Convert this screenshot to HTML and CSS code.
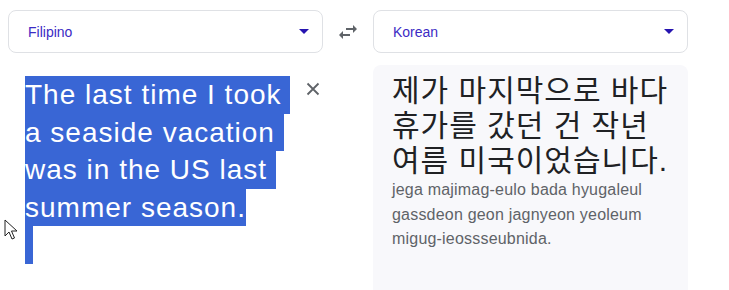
FILE: index.html
```html
<!DOCTYPE html>
<html lang="en">
<head>
  <meta charset="UTF-8">
  <title>Translate</title>
  <link rel="stylesheet" href="styles.css">
</head>
<body>
  <div class="bar">
    <div class="select">
      <span class="lang">Filipino</span>
      <span class="caret"></span>
    </div>
    <div class="swap">
      <svg width="24" height="24" viewBox="0 0 24 24"><path d="M6.99 11L3 15l3.99 4v-3H14v-2H6.99v-3zM21 9l-3.99-4v3H10v2h7.01v3L21 9z" fill="#5f6368"/></svg>
    </div>
    <div class="select">
      <span class="lang">Korean</span>
      <span class="caret"></span>
    </div>
  </div>
  <div class="panes">
    <div class="source">
      <div class="text">
        <span class="line">The last time I took </span>
        <span class="line">a seaside vacation </span>
        <span class="line">was in the US last </span>
        <span class="line">summer season.</span>
        <span class="line empty"></span>
      </div>
      <div class="clear">
        <svg width="14" height="14" viewBox="0 0 14 14"><path d="M1.5 1.5l11 11M12.5 1.5l-11 11" stroke="#5f6368" stroke-width="1.8"/></svg>
      </div>
    </div>
    <div class="target">
      <div class="result">제가 마지막으로 바다 휴가를 갔던 건 작년 여름 미국이었습니다.</div>
      <div class="roman">jega majimag-eulo bada hyugaleul gassdeon geon jagnyeon yeoleum migug-ieossseubnida.</div>
    </div>
  </div>
  <svg class="pointer" width="14" height="22" viewBox="0 0 14 22"><path d="M1 1v16l4-4 3 7 2.5-1-3-7h5.5z" fill="#fff" stroke="#222" stroke-width="1"/></svg>
</body>
</html>
```
FILE: styles.css
```css
body {
  margin: 0;
  background: #fff;
  font-family: 'Liberation Sans', Arial, sans-serif;
  color: #202124;
  overflow: hidden;
}
.bar {
  display: flex;
  padding: 10px 0 0 8px;
}
.select {
  width: 315px;
  height: 43px;
  box-sizing: border-box;
  border: 1px solid #dfe1e5;
  border-radius: 8px;
  display: flex;
  align-items: center;
  justify-content: space-between;
  padding: 0 13px 0 19px;
}
.lang {
  font-size: 14px;
  color: #3c2bc4;
}
.caret {
  width: 0;
  height: 0;
  border-left: 5px solid transparent;
  border-right: 5px solid transparent;
  border-top: 5px solid #2614b0;
}
.swap {
  width: 50px;
  display: flex;
  align-items: center;
  justify-content: center;
}
.panes {
  display: flex;
  padding: 12px 0 0 8px;
}
.source {
  width: 315px;
  display: flex;
  padding: 11px 0 0 17px;
  box-sizing: border-box;
}
.text {
  width: 270px;
  font-size: 28px;
  line-height: 37.5px;
  letter-spacing: 1px;
  color: #fff;
}
.line {
  display: block;
  width: fit-content;
  white-space: pre;
  background: #3966d5;
  height: 37.5px;
}
.line.empty {
  width: 8px;
}
.clear {
  padding: 6px 0 0 11px;
}
.target {
  margin-left: 50px;
  width: 315px;
  height: 225px;
  background: #f8f8fb;
  border-radius: 8px 8px 0 0;
  padding: 8px 14px 0 19px;
  box-sizing: border-box;
}
.result {
  font-family: 'Liberation Sans', 'Noto Sans CJK KR', sans-serif;
  font-size: 30px;
  line-height: 35px;
  letter-spacing: 1px;
  word-break: keep-all;
  color: #202124;
}
.roman {
  font-size: 16px;
  line-height: 24.5px;
  letter-spacing: 0.2px;
  color: #5f6368;
}
.pointer {
  position: absolute;
  left: 4px;
  top: 219px;
}
```
